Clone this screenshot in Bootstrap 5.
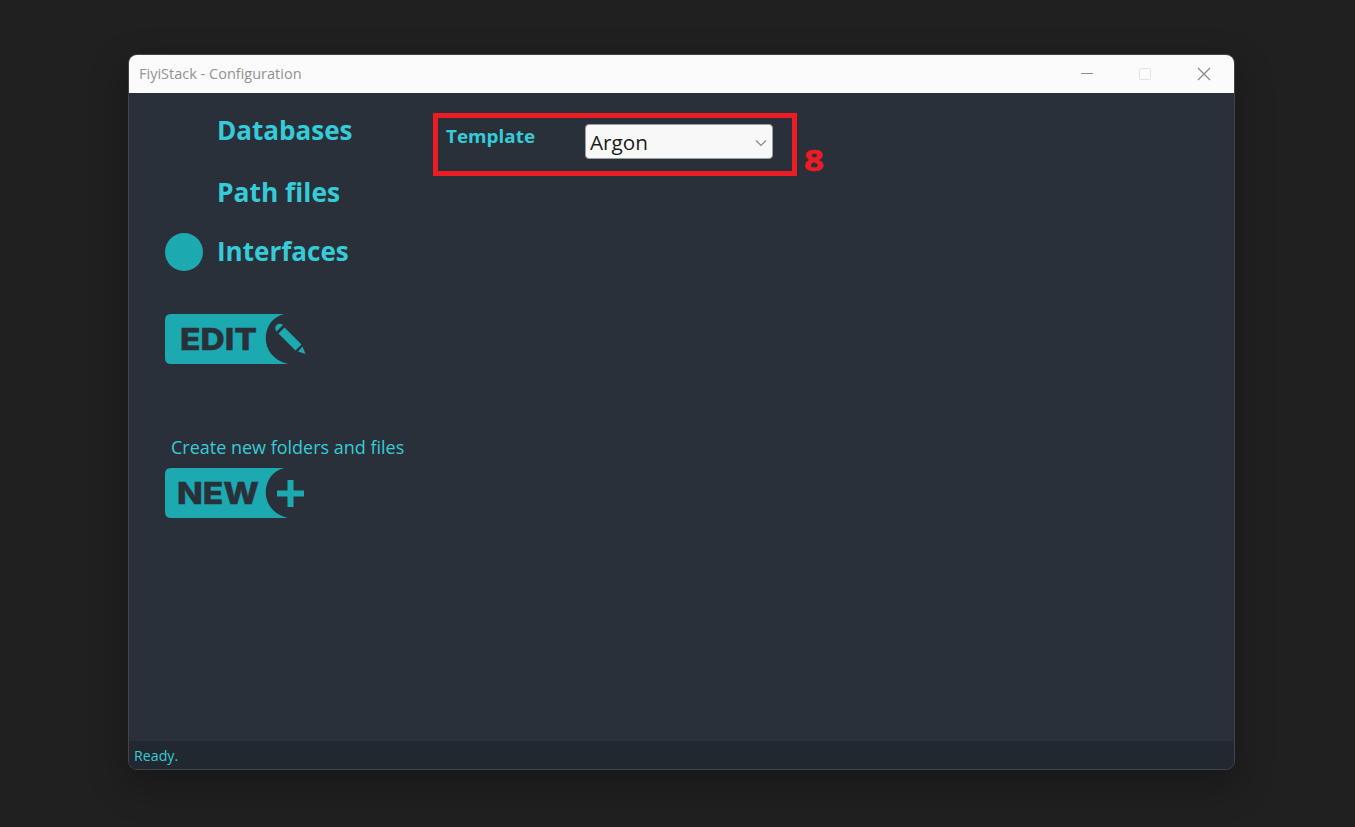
<!DOCTYPE html>
<html lang="en">
<head>
<meta charset="utf-8">
<meta name="viewport" content="width=device-width, initial-scale=1">
<title>FiyiStack - Configuration</title>
<link href="https://cdn.jsdelivr.net/npm/bootstrap@5.3.0/dist/css/bootstrap.min.css" rel="stylesheet">
<style>
  body { background: #202020; font-family: "Open Sans", "Noto Sans", sans-serif; color: #36cbd8; height: 827px; padding: 54px 0 0 128px; }
  .app-window { width: 1107px; height: 716px; border: 1px solid #434446; border-radius: 9px; background: #2a303a; box-shadow: 0 14px 36px 4px rgba(0,0,0,.24); }
  .title-bar { height: 38px; background: #fbfbfb; color: #929292; font-size: 15px; padding-left: 10px; }
  .title-bar svg { display: block; }
  .side { width: 304px; padding: 16px 0 0 36px; }
  .nav-row { height: 40px; font-size: 27.5px; font-weight: 700; line-height: 41px; }
  .nav-row .dot { width: 38px; height: 38px; margin: 3px 13.5px 0 0; }
  .row-path { margin-top: 22px; }
  .row-interfaces { margin-top: 19px; }
  .dot.on { background: #1ca9b0; }
  .art-btn { width: 150px; height: 50px; display: block; }
  .art-edit { margin-top: 44px; }
  .caption-new { margin: 69px 0 7px 6px; height: 28px; line-height: 28px; font-size: 18.5px; }
  .callout { width: 364px; height: 63px; border: 5px solid #ed1c24; margin-top: 20px; padding: 6px 0 0 8px; }
  .field-name { width: 139px; font-size: 18.5px; font-weight: 700; line-height: 24px; }
  .combo { width: 188px; height: 35px; background: #f8f8f8; border: 1px solid #9a9da1; border-radius: 4px; color: #1b1b1b; font-size: 20px; line-height: 35px; padding: 0 5px 0 4px; }
  .combo svg { margin-top: 2px; }
  .combo .t { margin-top: 2px; }
  .step-number { color: #ed1c24; font-size: 29px; font-weight: 700; line-height: 40px; margin: 47px 0 0 7px; }
  .status { height: 28px; background: #212830; font-size: 14.5px; line-height: 30px; padding-left: 5px; }
  .t { display: inline-block; white-space: nowrap; transform-origin: left center; }
  .t-title { transform: scaleX(.967); margin-top: -2px; }
  .t-db { transform: scaleX(.947); }
  .t-path { transform: scaleX(.959); }
  .t-int { transform: scaleX(.947); }
  .t-cap { transform: scaleX(.972); }
  .t-tpl { transform: scaleX(1.02); }
  .t-argon { transform: scaleX(1.035); }
  .t-ready { transform: scaleX(.98); }
  .t-eight { transform: scaleX(1.2); -webkit-text-stroke: .5px #ed1c24; }
</style>
</head>
<body>
<main class="app-window d-flex flex-column overflow-hidden">
  <header class="title-bar d-flex align-items-center justify-content-between flex-shrink-0">
    <span class="t t-title">FiyiStack - Configuration</span>
    <svg width="160" height="38" fill="none">
      <path d="M7 18.5h12" stroke="#8b8b8b"/>
      <rect x="65.5" y="13.5" width="11" height="11" rx="1" stroke="#e2e2e2"/>
      <path d="M124 13l12 12M136 13l-12 12" stroke="#858585" stroke-width="1.1"/>
    </svg>
  </header>
  <div class="d-flex flex-grow-1 align-items-start">
    <nav class="side flex-shrink-0">
      <div class="nav-row d-flex align-items-center"><span class="dot rounded-circle"></span><span class="t t-db">Databases</span></div>
      <div class="nav-row row-path d-flex align-items-center"><span class="dot rounded-circle"></span><span class="t t-path">Path files</span></div>
      <div class="nav-row row-interfaces d-flex align-items-center"><span class="dot on rounded-circle"></span><span class="t t-int">Interfaces</span></div>
      <svg class="art-btn art-edit" viewBox="0 0 150 50" role="button">
        <path d="M6 0H119C95 6 93 43 123 50H6Q0 50 0 44V6Q0 0 6 0Z" fill="#1ca9b0"/>
        <text x="15" y="35.5" font-family="Inter, sans-serif" font-weight="800" font-size="30" textLength="77" lengthAdjust="spacingAndGlyphs" fill="#2a303a" stroke="#2a303a" stroke-width=".4">EDIT</text>
        <g fill="#1ca9b0">
          <path d="M111.5 17.5L118 11Q114.5 8.5 111.5 11Q109 14 111.5 17.5Z"/>
          <path d="M113.5 19.5L119.5 13.5L136.5 30.5L130.5 36.5Z"/>
          <path d="M133 37.5L137.5 32.5L140.5 40Z"/>
        </g>
      </svg>
      <div class="caption-new"><span class="t t-cap">Create new folders and files</span></div>
      <svg class="art-btn" viewBox="0 0 150 50" role="button">
        <path d="M6 0H119C95 6 93 43 123 50H6Q0 50 0 44V6Q0 0 6 0Z" fill="#1ca9b0"/>
        <text x="12" y="35.5" font-family="Inter, sans-serif" font-weight="800" font-size="30" textLength="82" lengthAdjust="spacingAndGlyphs" fill="#2a303a" stroke="#2a303a" stroke-width=".4">NEW</text>
        <path d="M122.5 12h6v10.5H139v6H128.5V39h-6V28.5H112v-6h10.500z" fill="#1ca9b0"/>
      </svg>
    </nav>
    <section class="callout d-flex align-items-start flex-shrink-0">
      <label class="field-name flex-shrink-0"><span class="t t-tpl">Template</span></label>
      <div class="combo d-flex align-items-center justify-content-between flex-shrink-0" role="combobox">
        <span class="t t-argon">Argon</span>
        <svg width="12" height="8" fill="none"><path d="M1 1.5L6 6.5L11 1.5" stroke="#858585" stroke-width="1.2"/></svg>
      </div>
    </section>
    <span class="step-number"><span class="t t-eight">8</span></span>
  </div>
  <footer class="status flex-shrink-0"><span class="t t-ready">Ready.</span></footer>
</main>
<script src="https://cdn.jsdelivr.net/npm/bootstrap@5.3.0/dist/js/bootstrap.bundle.min.js"></script>
</body>
</html>
